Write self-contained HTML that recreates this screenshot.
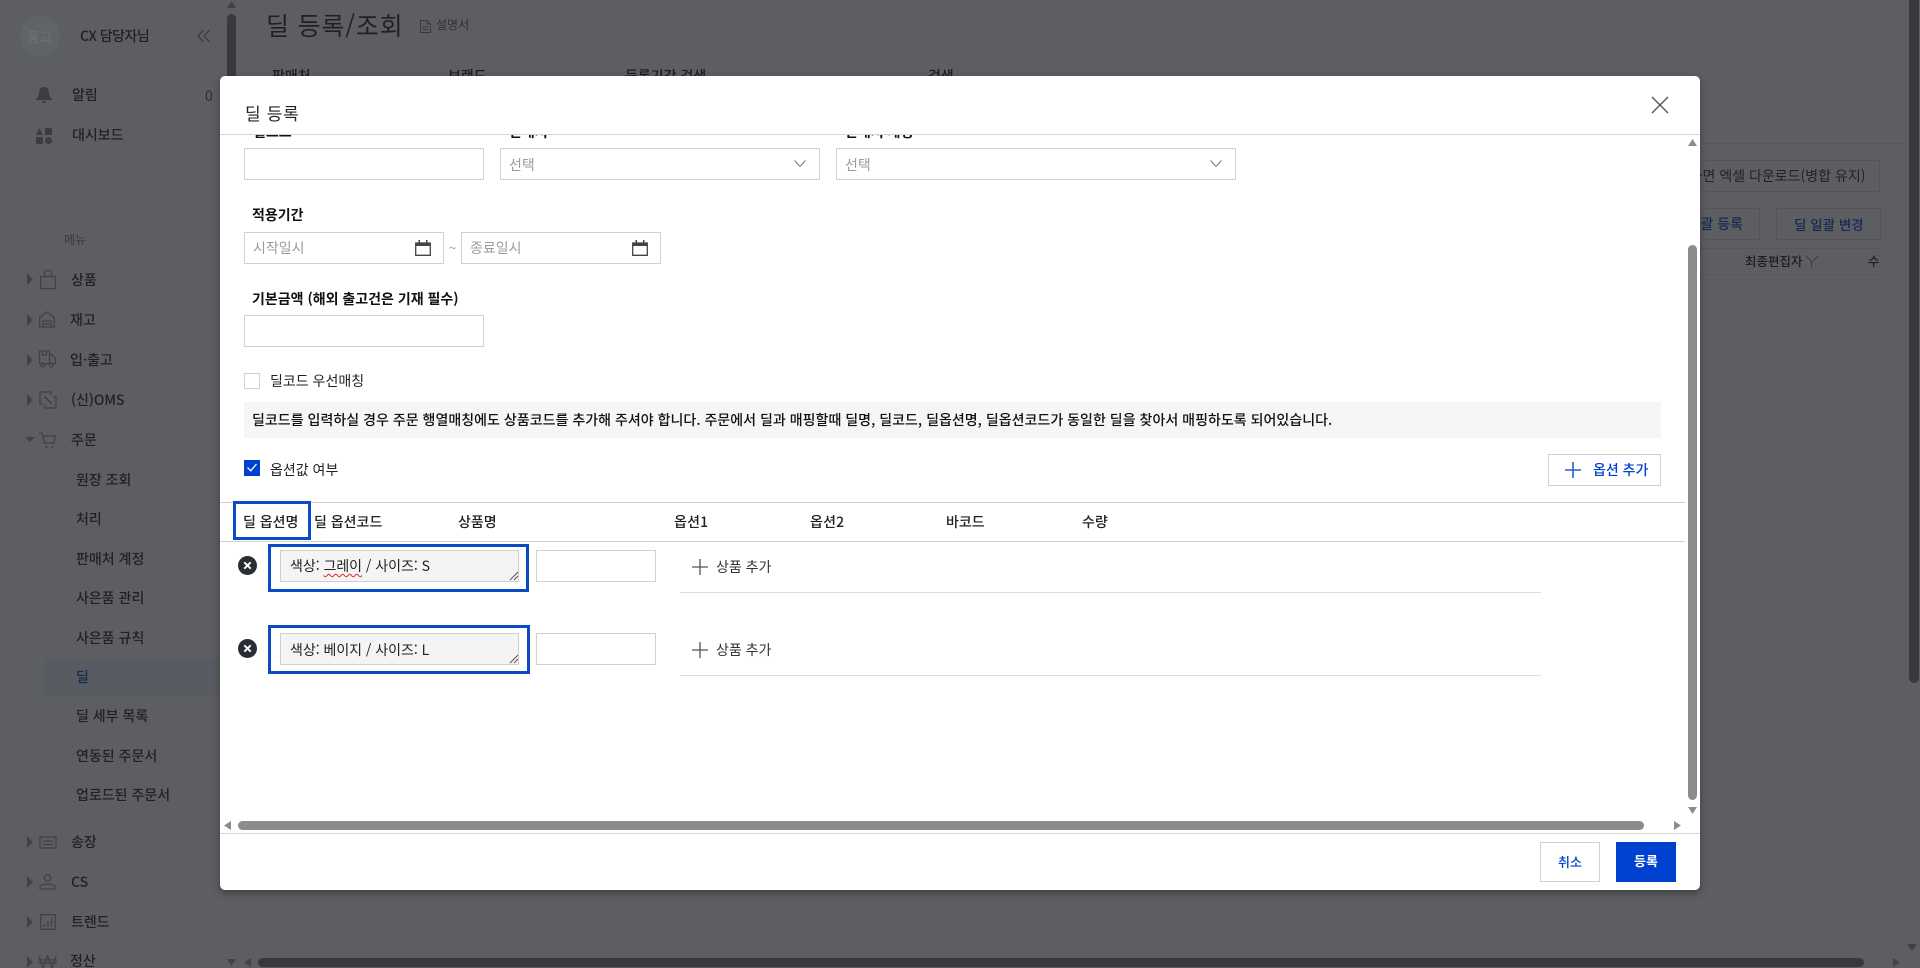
<!DOCTYPE html>
<html lang="ko">
<head>
<meta charset="utf-8">
<title>딜 등록/조회</title>
<style>
html,body{margin:0;padding:0;width:1920px;height:968px;overflow:hidden;background:#fff}
body{position:relative;font-family:"Noto Sans CJK KR","Liberation Sans",sans-serif;color:#111;font-size:14px}
.t{position:absolute;white-space:nowrap;line-height:20px;height:20px}
.b{position:absolute;box-sizing:border-box}
svg{position:absolute;overflow:visible}
#overlay{position:absolute;left:0;top:0;width:1920px;height:968px;background:rgba(30,33,38,.724)}
#modal{position:absolute;left:220px;top:76px;width:1480px;height:814px;background:#fff;border-radius:5px;box-shadow:0 3px 8px rgba(0,0,0,.35);overflow:hidden}
.inp{border:1px solid #d0d0d0;background:#fff}
.ph{color:#9c9c9c}
.lb{font-weight:700;font-size:14px;color:#111}
.th{font-weight:500;font-size:14px;color:#222}
.hl{border:3px solid #0a4bc4}
.ta{border:1px solid #cfcfcf;background:#f4f4f4}
.side{color:#222;font-size:14px;font-weight:500}
.ic{fill:none;stroke:#999;stroke-width:1.300}
.ar{fill:#999}
</style>
</head>
<body>
<!-- background page -->
<div class="t side" style="left:80px;top:26px;font-size:14px;letter-spacing:-.5px">CX 담당자님</div>
<svg style="left:197px;top:29px" width="14" height="14" viewBox="0 0 14 14"><path d="M6.500 1L1 7l5.500 6M12.500 1L7 7l5.500 6" fill="none" stroke="#777" stroke-width="1.200"/></svg>

<svg style="left:36px;top:87px" width="16" height="17" viewBox="0 0 16 17"><path d="M8 0c-3.500 0-5 2.500-5 5.500 0 3-1 4.500-3 6.500v1h16v-1c-2-2-3-3.500-3-6.500C13 2.500 11.500 0 8 0zM6 14a2 2 0 004 0z" fill="#888"/></svg>
<div class="t side" style="left:72px;top:85px;font-size:14px">알림</div>
<div class="t" style="left:205px;top:86px;font-size:14px;color:#e0002a">0</div>
<svg style="left:36px;top:128px" width="16" height="16" viewBox="0 0 16 16"><path d="M3.500 0L7 7H0zM9 0h7v7H9zM0 9h7v7H0z" fill="#888"/><circle cx="12.500" cy="12.500" r="3.500" fill="#888"/></svg>
<div class="t side" style="left:72px;top:125px;font-size:14px">대시보드</div>
<div class="t" style="left:64px;top:230px;font-size:12px;color:#777">메뉴</div>

<svg style="left:27px;top:273px" width="6" height="12"><path class="ar" d="M0 0l6 6-6 6z"/></svg>
<svg style="left:40px;top:270px" width="16" height="19" viewBox="0 0 16 19"><path class="ic" d="M.700 6.500h14.600v12H.700zM4.500 6.500V3.500a3.500 3 0 017 0v3"/></svg>
<div class="t side" style="left:71px;top:270px">상품</div>
<svg style="left:27px;top:314px" width="6" height="12"><path class="ar" d="M0 0l6 6-6 6z"/></svg>
<svg style="left:39px;top:311px" width="16" height="17" viewBox="0 0 16 17"><path class="ic" d="M.700 6.500L8 1l7.300 5.500V16H.700zM4 16v-6h8v6M4 13h8"/></svg>
<div class="t side" style="left:70px;top:310px">재고</div>
<svg style="left:27px;top:354px" width="6" height="12"><path class="ar" d="M0 0l6 6-6 6z"/></svg>
<svg style="left:38px;top:350px" width="18" height="18" viewBox="0 0 18 18"><path class="ic" d="M1.500 1h10v12.500h-10zM11.500 5h3l3 3.500v5h-6M4.500 1v4h4V1M3 14h8M15 14"/><circle class="ic" cx="4.500" cy="15" r="2"/><circle class="ic" cx="13.500" cy="15" r="2"/></svg>
<div class="t side" style="left:70px;top:350px">입·출고</div>
<svg style="left:27px;top:394px" width="6" height="12"><path class="ar" d="M0 0l6 6-6 6z"/></svg>
<svg style="left:39px;top:391px" width="18" height="18" viewBox="0 0 18 18"><path class="ic" d="M4 13H1V1h11v3M14 6h3v11H6v-3M6 6l6 6"/><circle cx="6.500" cy="6.500" r="1.300" fill="#999"/><circle cx="11.500" cy="11.500" r="1.300" fill="#999"/></svg>
<div class="t side" style="left:71px;top:390px">(신)OMS</div>
<svg style="left:25px;top:437px" width="10" height="6"><path class="ar" d="M0 0h10L5 5z"/></svg>
<svg style="left:39px;top:432px" width="17" height="16" viewBox="0 0 17 16"><path class="ic" d="M0 1h3l2.500 10h9.500L16.500 4H4M6 15h2.500M12 15h2.500"/></svg>
<div class="t side" style="left:71px;top:430px">주문</div>
<div class="t side" style="left:76px;top:470px">원장 조회</div>
<div class="t side" style="left:76px;top:509px">처리</div>
<div class="t side" style="left:76px;top:549px">판매처 계정</div>
<div class="t side" style="left:76px;top:588px">사은품 관리</div>
<div class="t side" style="left:76px;top:628px">사은품 규칙</div>
<div class="b" style="left:45px;top:658px;width:183px;height:38px;background:#eef2fb"></div>
<div class="t side" style="left:76px;top:667px;color:#0041cf">딜</div>
<div class="t side" style="left:76px;top:706px">딜 세부 목록</div>
<div class="t side" style="left:76px;top:746px">연동된 주문서</div>
<div class="t side" style="left:76px;top:785px">업로드된 주문서</div>
<svg style="left:27px;top:836px" width="6" height="12"><path class="ar" d="M0 0l6 6-6 6z"/></svg>
<svg style="left:39px;top:836px" width="18" height="13" viewBox="0 0 18 13"><path class="ic" d="M1 1h16v11H1zM4 5h10M4 8.500h10"/></svg>
<div class="t side" style="left:71px;top:832px">송장</div>
<svg style="left:27px;top:876px" width="6" height="12"><path class="ar" d="M0 0l6 6-6 6z"/></svg>
<svg style="left:39px;top:874px" width="17" height="16" viewBox="0 0 17 16"><circle class="ic" cx="8.500" cy="4" r="3.300"/><path class="ic" d="M1 15v-2c0-2 3-3 7.500-3s7.500 1 7.500 3v2z"/></svg>
<div class="t side" style="left:71px;top:872px">CS</div>
<svg style="left:27px;top:916px" width="6" height="12"><path class="ar" d="M0 0l6 6-6 6z"/></svg>
<svg style="left:40px;top:914px" width="16" height="16" viewBox="0 0 16 16"><path class="ic" d="M.700.700h14.600v14.600H.700zM4.500 13v-3M8 13V7M11.500 13V4.500"/></svg>
<div class="t side" style="left:71px;top:912px">트렌드</div>
<svg style="left:27px;top:956px" width="6" height="12"><path class="ar" d="M0 0l6 6-6 6z"/></svg>
<svg style="left:38px;top:955px" width="19" height="13" viewBox="0 0 19 13"><path class="ic" d="M1 1l4 12 4.500-12 4.500 12 4-12M0 5h19M0 8h19"/></svg>
<div class="t side" style="left:70px;top:951px">정산</div>

<!-- sidebar scrollbar -->
<div class="b" style="left:227px;top:14px;width:9px;height:600px;border-radius:5px;background:#777"></div>
<svg style="left:227px;top:1px" width="9" height="7"><path class="ar" d="M0 7L4.500 0 9 7z"/></svg>
<svg style="left:227px;top:959px" width="9" height="7"><path class="ar" d="M0 0l4.500 7L9 0z"/></svg>

<!-- main -->
<div class="t" style="left:266px;top:10px;height:30px;line-height:30px;font-size:25px;color:#222;letter-spacing:.8px">딜 등록/조회</div>
<svg style="left:420px;top:20px" width="11" height="13" viewBox="0 0 11 13"><path d="M.500.500h6.500L10.500 4v8.500H.500zM7 .500V4h3.500M2.500 7h6M2.500 9.500h6" fill="none" stroke="#777"/></svg>
<div class="t" style="left:436px;top:15px;font-size:12px;color:#555">설명서</div>
<div class="t lb" style="left:272px;top:66px;font-weight:500">판매처</div>
<div class="t lb" style="left:448px;top:66px;font-weight:500">브랜드</div>
<div class="t lb" style="left:625px;top:66px;font-weight:500">등록기간 검색</div>
<div class="t lb" style="left:928px;top:66px;font-weight:500">검색</div>

<div class="b" style="left:1700px;top:143px;width:205px;height:1px;background:#e8e8e8"></div>
<div class="b" style="left:1560px;top:160px;width:320px;height:32px;border:1px solid #ddd"></div>
<div class="t" style="left:1660px;top:166px;width:203px;text-align:right;font-size:14px;color:#222">전체 화면 엑셀 다운로드(병합 유지)</div>
<div class="b" style="left:1640px;top:208px;width:120px;height:32px;border:1px solid #ddd"></div>
<div class="t" style="left:1650px;top:214px;width:93px;text-align:right;font-size:14px;color:#0041cf;font-weight:500">딜 일괄 등록</div>
<div class="b" style="left:1776px;top:208px;width:105px;height:32px;border:1px solid #ddd"></div>
<div class="t" style="left:1794px;top:214px;font-size:13.500px;color:#0041cf;font-weight:500">딜 일괄 변경</div>
<div class="b" style="left:1640px;top:248px;width:240px;height:27px;border-top:1px solid #e4e4e4;border-bottom:1px solid #e4e4e4"></div>
<div class="t" style="left:1745px;top:251px;font-size:12.500px;color:#111;font-weight:500">최종편집자</div>
<svg style="left:1806px;top:256px" width="12" height="11" viewBox="0 0 12 11"><path d="M0 0l5.500 5.500V11M12 0L6.500 5.500" fill="none" stroke="#888"/></svg>
<div class="t" style="left:1868px;top:251px;font-size:12.500px;color:#111;font-weight:500">수</div>

<!-- page scrollbars -->
<div class="b" style="left:1909px;top:0;width:10px;height:683px;border-radius:0 0 5px 5px;background:#777"></div>
<svg style="left:1907px;top:944px" width="10" height="7"><path class="ar" d="M0 0l5 7 5-7z"/></svg>
<div class="b" style="left:258px;top:958px;width:1606px;height:9px;border-radius:5px;background:#777"></div>
<svg style="left:244px;top:958px" width="7" height="9"><path class="ar" d="M7 0L0 4.500 7 9z"/></svg>
<svg style="left:1893px;top:958px" width="7" height="9"><path class="ar" d="M0 0l7 4.500L0 9z"/></svg>

<div id="overlay"></div>

<!-- avatar (blurred under overlay) -->
<div class="b" style="left:20px;top:16px;width:40px;height:40px;border-radius:50%;background:#606367"></div>
<div class="t" style="left:27px;top:26px;font-size:13.500px;color:#6f7175">품고</div>

<!-- modal -->
<div id="modal">
  <div class="t" style="left:25px;top:25px;height:24px;line-height:24px;font-size:17px;letter-spacing:.7px;color:#222">딜 등록</div>
  <svg style="left:1431px;top:20px" width="18" height="18" viewBox="0 0 18 18"><path d="M1 1l16 16M17 1L1 17" stroke="#555" stroke-width="1.400" fill="none"/></svg>

  <!-- clipped labels -->
  <div class="b" style="left:0;top:59px;width:1468px;height:10px;overflow:hidden">
    <div class="t lb" style="left:33px;top:-13px">딜코드</div>
    <div class="t lb" style="left:289px;top:-13px">판매처</div>
    <div class="t lb" style="left:625px;top:-13px">판매처 계정</div>
  </div>
  <div class="b" style="left:0;top:58px;width:1480px;height:1px;background:#d4d4d4"></div>

  <div class="b inp" style="left:24px;top:72px;width:240px;height:32px"></div>
  <div class="b inp" style="left:280px;top:72px;width:320px;height:32px"></div>
  <div class="t ph" style="left:289px;top:79px;font-size:14px">선택</div>
  <svg style="left:574px;top:84px" width="12" height="8"><path d="M.500.500L6 6.500 11.500.500" fill="none" stroke="#777"/></svg>
  <div class="b inp" style="left:616px;top:72px;width:400px;height:32px"></div>
  <div class="t ph" style="left:625px;top:79px;font-size:14px">선택</div>
  <svg style="left:990px;top:84px" width="12" height="8"><path d="M.500.500L6 6.500 11.500.500" fill="none" stroke="#777"/></svg>

  <div class="t lb" style="left:32px;top:129px">적용기간</div>
  <div class="b inp" style="left:24px;top:156px;width:200px;height:32px"></div>
  <div class="t ph" style="left:33px;top:162px;font-size:14px">시작일시</div>
  <svg style="left:195px;top:164px" width="16" height="16" viewBox="0 0 16 16"><path d="M.700 3h14.600v12.300H.700z" fill="none" stroke="#444" stroke-width="1.300"/><path d="M.700 3h14.600v3H.700zM3.500 0h1.500v3H3.500zM11 0h1.500v3H11z" fill="#444"/></svg>
  <div class="t ph" style="left:229px;top:162px;font-size:13px;width:12px">~</div>
  <div class="b inp" style="left:241px;top:156px;width:200px;height:32px"></div>
  <div class="t ph" style="left:250px;top:162px;font-size:14px">종료일시</div>
  <svg style="left:412px;top:164px" width="16" height="16" viewBox="0 0 16 16"><path d="M.700 3h14.600v12.300H.700z" fill="none" stroke="#444" stroke-width="1.300"/><path d="M.700 3h14.600v3H.700zM3.500 0h1.500v3H3.500zM11 0h1.500v3H11z" fill="#444"/></svg>

  <div class="t lb" style="left:32px;top:213px">기본금액 (해외 출고건은 기재 필수)</div>
  <div class="b inp" style="left:24px;top:239px;width:240px;height:32px"></div>

  <div class="b inp" style="left:24px;top:297px;width:16px;height:16px"></div>
  <div class="t" style="left:50px;top:295px;font-size:14px;color:#222">딜코드 우선매칭</div>
  <div class="b" style="left:24px;top:326px;width:1417px;height:36px;background:#f6f6f6"></div>
  <div class="t" style="left:32px;top:334px;font-size:14px;color:#111;font-weight:500;letter-spacing:.02px">딜코드를 입력하실 경우 주문 행열매칭에도 상품코드를 추가해 주셔야 합니다. 주문에서 딜과 매핑할때 딜명, 딜코드, 딜옵션명, 딜옵션코드가 동일한 딜을 찾아서 매핑하도록 되어있습니다.</div>

  <div class="b" style="left:24px;top:384px;width:16px;height:16px;background:#0041cf"></div>
  <svg style="left:27px;top:387px" width="10" height="9"><path d="M.500 4.500L3.800 7.800 9.500 1" fill="none" stroke="#fff" stroke-width="1.300"/></svg>
  <div class="t" style="left:50px;top:384px;font-size:14px;color:#222">옵션값 여부</div>
  <div class="b" style="left:1328px;top:378px;width:113px;height:32px;border:1px solid #d0d0d0;background:#fff"></div>
  <svg style="left:1345px;top:386px" width="16" height="16"><path d="M8 0v16M0 8h16" stroke="#2a5fc8" stroke-width="1.600"/></svg>
  <div class="t" style="left:1373px;top:384px;font-size:14px;color:#0041cf;font-weight:500">옵션 추가</div>

  <div class="b" style="left:0;top:426px;width:1465px;height:1px;background:#d0d0d0"></div>
  <div class="b" style="left:0;top:465px;width:1465px;height:1px;background:#d0d0d0"></div>
  <div class="b hl" style="left:13px;top:425px;width:78px;height:39px"></div>
  <div class="t th" style="left:23px;top:436px">딜 옵션명</div>
  <div class="t th" style="left:94px;top:436px">딜 옵션코드</div>
  <div class="t th" style="left:238px;top:436px">상품명</div>
  <div class="t th" style="left:454px;top:436px;letter-spacing:.2px">옵션1</div>
  <div class="t th" style="left:590px;top:436px;letter-spacing:.2px">옵션2</div>
  <div class="t th" style="left:726px;top:436px">바코드</div>
  <div class="t th" style="left:862px;top:436px">수량</div>

  <!-- row 1 -->
  <svg style="left:18px;top:480px" width="19" height="19" viewBox="0 0 19 19"><circle cx="9.500" cy="9.500" r="9.500" fill="#2a2d33"/><path d="M6.300 6.300l6.400 6.400M12.700 6.300l-6.400 6.400" stroke="#fff" stroke-width="1.900"/></svg>
  <div class="b hl" style="left:48px;top:468px;width:261px;height:48px"></div>
  <div class="b ta" style="left:60px;top:474px;width:239px;height:32px"></div>
  <svg style="left:289px;top:495px" width="9" height="9"><path d="M9 1L1 9M9 5L5 9" stroke="#555" stroke-width="1"/></svg>
  <div class="t" style="left:70px;top:480px;font-size:14px;letter-spacing:-.03px;color:#222">색상: <span style="text-decoration:underline wavy #e2222a 1px;text-underline-offset:2px">그레이</span> / 사이즈: S</div>
  <div class="b inp" style="left:316px;top:474px;width:120px;height:32px"></div>
  <svg style="left:472px;top:483px" width="16" height="16"><path d="M8 0v16M0 8h16" stroke="#555" stroke-width="1.300"/></svg>
  <div class="t" style="left:496px;top:481px;font-size:14px;color:#333">상품 추가</div>
  <div class="b" style="left:460px;top:516px;width:861px;height:1px;background:#ddd"></div>

  <!-- row 2 -->
  <svg style="left:18px;top:563px" width="19" height="19" viewBox="0 0 19 19"><circle cx="9.500" cy="9.500" r="9.500" fill="#2a2d33"/><path d="M6.300 6.300l6.400 6.400M12.700 6.300l-6.400 6.400" stroke="#fff" stroke-width="1.900"/></svg>
  <div class="b hl" style="left:48px;top:549px;width:262px;height:49px"></div>
  <div class="b ta" style="left:60px;top:557px;width:239px;height:32px"></div>
  <svg style="left:289px;top:578px" width="9" height="9"><path d="M9 1L1 9M9 5L5 9" stroke="#555" stroke-width="1"/></svg>
  <div class="t" style="left:70px;top:564px;font-size:14px;letter-spacing:-.03px;color:#222">색상: 베이지 / 사이즈: L</div>
  <div class="b inp" style="left:316px;top:557px;width:120px;height:32px"></div>
  <svg style="left:472px;top:566px" width="16" height="16"><path d="M8 0v16M0 8h16" stroke="#555" stroke-width="1.300"/></svg>
  <div class="t" style="left:496px;top:564px;font-size:14px;color:#333">상품 추가</div>
  <div class="b" style="left:460px;top:599px;width:861px;height:1px;background:#ddd"></div>

  <!-- modal scrollbars -->
  <svg style="left:1468px;top:63px" width="9" height="7"><path d="M0 7L4.500 0 9 7z" fill="#8c8c8c"/></svg>
  <div class="b" style="left:1468px;top:169px;width:9px;height:555px;border-radius:5px;background:#8c8c8c"></div>
  <svg style="left:1468px;top:731px" width="9" height="7"><path d="M0 0l4.500 7L9 0z" fill="#8c8c8c"/></svg>
  <svg style="left:4px;top:745px" width="7" height="9"><path d="M7 0L0 4.500 7 9z" fill="#8c8c8c"/></svg>
  <div class="b" style="left:18px;top:745px;width:1406px;height:9px;border-radius:5px;background:#8c8c8c"></div>
  <svg style="left:1454px;top:745px" width="7" height="9"><path d="M0 0l7 4.500L0 9z" fill="#8c8c8c"/></svg>

  <!-- footer -->
  <div class="b" style="left:0;top:757px;width:1480px;height:1px;background:#d4d4d4"></div>
  <div class="b" style="left:1320px;top:766px;width:60px;height:40px;border:1px solid #d0d0d0;background:#fff"></div>
  <div class="t" style="left:1320px;top:776px;width:60px;text-align:center;font-size:13px;color:#0041cf;font-weight:500">취소</div>
  <div class="b" style="left:1396px;top:766px;width:60px;height:40px;background:#0041cf"></div>
  <div class="t" style="left:1396px;top:775px;width:60px;text-align:center;font-size:13px;color:#fff;font-weight:700">등록</div>
</div>
</body>
</html>
